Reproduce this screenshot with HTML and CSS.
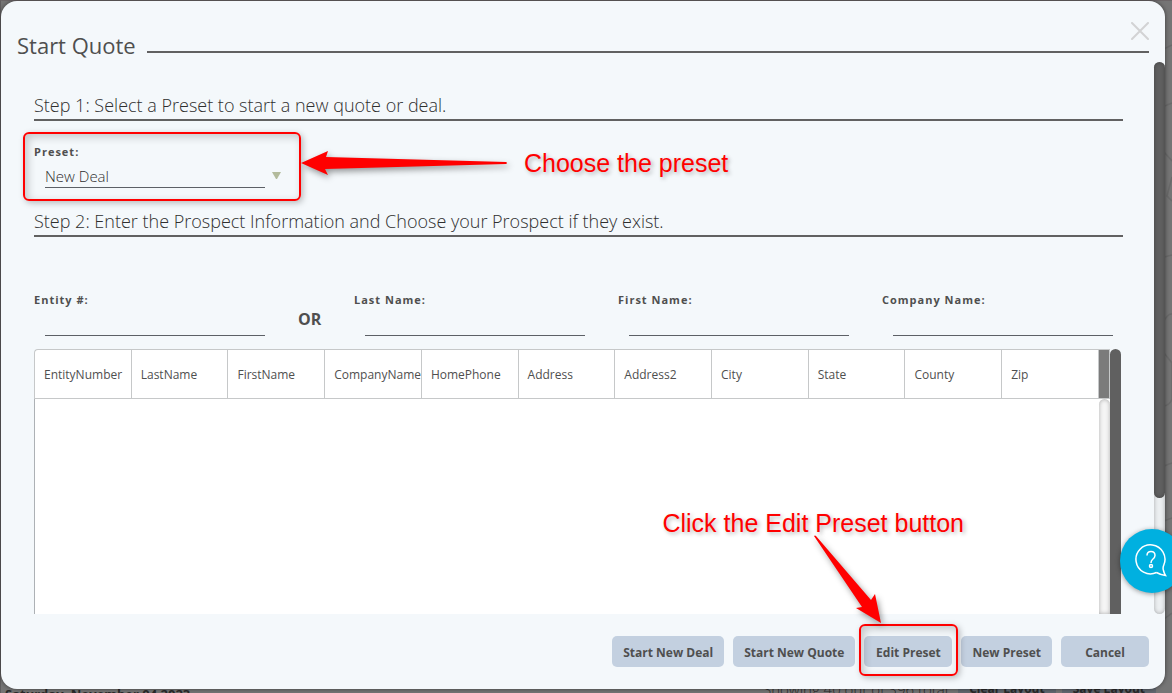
FILE: index.html
```html
<!DOCTYPE html>
<html lang="en">
<head>
    <meta charset="UTF-8">
    <meta name="viewport" content="width=device-width, initial-scale=1.0">
    <title>Start Quote</title>
    <link rel="stylesheet" href="styles.css">
</head>
<body>
    <!-- Dimmed page under the dialog -->
    <div class="page" aria-hidden="true">
        <svg class="page-pattern" viewBox="0 0 52 693" width="52" height="693">
            <path d="M40 50 L52 44 M40 107 L52 102 M44 151 L52 160 M52 176 L47 195 L52 200 M44 256 L52 254 M44 320 Q48 312 52 313 M44 352 L52 362 V398 Q50 404 44 405 M44 465 L52 462 M44 520 L52 517 M44 618 L52 612"/>
        </svg>
        <div class="page-footer">
            <span class="page-date">Saturday, November 04 2023</span>
            <span class="page-count">Showing 40 out of 396 total</span>
            <span class="page-btn">Clear Layout</span>
            <span class="page-btn">Save Layout</span>
        </div>
    </div>

    <div class="dialog" role="dialog" aria-labelledby="dialog-title">
        <button class="close" aria-label="Close">
            <svg viewBox="0 0 18 18" width="18" height="18"><path d="M1 1 L17 17 M17 1 L1 17"/></svg>
        </button>
        <div class="dialog-header">
            <h1 id="dialog-title">Start Quote</h1>
            <div class="header-line"></div>
        </div>

        <div class="dialog-body">
            <div class="content">
                <h2>Step 1: Select a Preset to start a new quote or deal.</h2>
                <div class="field preset">
                    <label for="preset">Preset:</label>
                    <div class="select-row">
                        <select id="preset">
                            <option>New Deal</option>
                        </select>
                        <svg class="caret" viewBox="0 0 9 7" width="9" height="7"><path d="M0 0 H9 L5 7 H4 Z"/></svg>
                    </div>
                </div>

                <h2 class="step-two">Step 2: Enter the Prospect Information and Choose your Prospect if they exist.</h2>
                <div class="prospect">
                    <div class="field">
                        <label for="entity">Entity #:</label>
                        <input type="text" id="entity">
                    </div>
                    <div class="or">OR</div>
                    <div class="field">
                        <label for="last-name">Last Name:</label>
                        <input type="text" id="last-name">
                    </div>
                    <div class="field">
                        <label for="first-name">First Name:</label>
                        <input type="text" id="first-name">
                    </div>
                    <div class="field">
                        <label for="company-name">Company Name:</label>
                        <input type="text" id="company-name">
                    </div>
                </div>

                <div class="grid">
                    <div class="grid-main">
                        <div class="grid-head">
                            <table>
                                <thead>
                                    <tr>
                                        <th>EntityNumber</th>
                                        <th>LastName</th>
                                        <th>FirstName</th>
                                        <th>CompanyName</th>
                                        <th>HomePhone</th>
                                        <th>Address</th>
                                        <th>Address2</th>
                                        <th>City</th>
                                        <th>State</th>
                                        <th>County</th>
                                        <th>Zip</th>
                                    </tr>
                                </thead>
                            </table>
                            <div class="grid-corner"></div>
                        </div>
                        <div class="grid-rows">
                            <div class="track"></div>
                        </div>
                    </div>
                    <div class="grid-scroll"></div>
                </div>
            </div>
            <div class="track dialog-scroll"><div class="thumb"></div></div>
        </div>

        <div class="dialog-footer">
            <button class="btn">Start New Deal</button>
            <button class="btn">Start New Quote</button>
            <button class="btn">Edit Preset</button>
            <button class="btn">New Preset</button>
            <button class="btn">Cancel</button>
        </div>
    </div>

    <button class="help" aria-label="Help">
        <svg viewBox="0 0 32 34" width="32" height="34">
            <path d="M21.500 29.500 A14.500 14.500 0 1 1 28.800 22 Q27.500 25 28.500 27.500 Q29 30 30.500 32.500 Q26 32 21.500 29.500"/>
            <path d="M12 12.500 Q12 8.500 16 8.500 Q20 8.500 20 12.500 Q20 14.500 17.500 16.500 Q16 17.800 16 20"/>
            <circle cx="16" cy="23" r="1.500"/>
        </svg>
    </button>

    <!-- Callouts -->
    <div class="callout-box box-preset"></div>
    <div class="callout-box box-edit"></div>
    <p class="callout text-preset">Choose the preset</p>
    <p class="callout text-edit">Click the Edit Preset button</p>
    <svg class="arrow arrow-preset" viewBox="0 0 207 26" width="207" height="26">
        <path d="M0 13 L27 1 L25 7 L205 12 Q207 13 205 14 L24 19 L27 25 Z"/>
    </svg>
    <svg class="arrow arrow-edit" viewBox="0 0 70 90" width="70" height="90">
        <path d="M0 1 Q1 0 2 1 L57 65 L61 59 L67 88 L42 73 L48 72 Z"/>
    </svg>
</body>
</html>
```

FILE: styles.css
```css
* {
    box-sizing: border-box;
}

body {
    margin: 0;
    height: 100vh;
    display: flex;
    padding: 1px 7px 4px 1px;
    position: relative;
    overflow: hidden;
    background: #757575;
    color: #4f4f4f;
    font-family: "Open Sans", "Noto Sans", sans-serif;
}

h1, h2, p {
    margin: 0;
    font-weight: 400;
}

button, input, select {
    font-family: inherit;
    color: inherit;
}

/* Page underneath */
.page {
    position: absolute;
    inset: 0;
    overflow: hidden;
    border-top: 1px solid #6b6567;
    border-left: 1px solid #5f5d5e;
}

.page-pattern {
    position: absolute;
    top: 0;
    right: 0;
    fill: none;
    stroke: #6a6a6a;
    stroke-width: 1.5;
}

.page-footer {
    position: absolute;
    left: 4px;
    right: 16px;
    bottom: -8px;
    display: flex;
    align-items: center;
    gap: 6px;
    height: 24px;
    font-size: 13px;
    color: #2a2a2a;
    white-space: nowrap;
}

.page-date {
    margin-right: auto;
    padding-top: 10px;
    font-weight: 700;
}

.page-count {
    margin-right: 4px;
    font-size: 15px;
    font-weight: 300;
}

.page-btn {
    height: 24px;
    padding: 0 11px;
    line-height: 24px;
    border-radius: 5px;
    background: #61676f;
    font-size: 12px;
    font-weight: 700;
}

/* Dialog */
.dialog {
    flex: 1;
    min-width: 0;
    display: flex;
    flex-direction: column;
    position: relative;
    border-radius: 16px;
    background: #f4f8fb;
    box-shadow: 0 0 4px rgba(0, 0, 0, 0.5);
    overflow: hidden;
}

.dialog-header {
    display: flex;
    align-items: flex-end;
    gap: 11px;
    height: 61px;
    padding: 0 16px 0 16px;
}

h1 {
    font-size: 22px;
    line-height: 34px;
}

.header-line {
    flex: 1;
    height: 2px;
    margin-bottom: 9px;
    background: #616161;
}

.close {
    position: absolute;
    top: 21px;
    right: 16px;
    width: 18px;
    height: 18px;
    padding: 0;
    border: 0;
    background: none;
}

.close svg {
    display: block;
    stroke: #d2d3d4;
    stroke-width: 2;
    stroke-linecap: round;
}

.dialog-body {
    flex: 1;
    min-height: 0;
    display: flex;
}

.content {
    flex: 1;
    min-width: 0;
    display: flex;
    flex-direction: column;
    padding: 31px 31px 0 33px;
}

h2 {
    padding-bottom: 2px;
    border-bottom: 2px solid #616161;
    color: #2f2f2f;
    font-size: 18px;
    line-height: 24px;
    font-weight: 300;
}

.step-two {
    margin-top: 21px;
}

.field label {
    display: block;
    font-size: 11px;
    line-height: 16px;
    font-weight: 700;
    letter-spacing: 1px;
}

.field input,
.field select {
    display: block;
    width: calc(100% - 11px);
    height: 28px;
    margin-left: 11px;
    padding: 5px 0 0;
    border: 0;
    border-bottom: 1px solid #5c6066;
    border-radius: 0;
    background: transparent;
    appearance: none;
    outline: none;
    color: #2f2f2f;
    font-size: 15px;
    font-weight: 300;
}

.preset {
    margin-top: 23px;
}

.select-row {
    display: flex;
    align-items: center;
    gap: 7px;
}

.select-row select {
    width: 220px;
}

.caret {
    margin-top: 2px;
    fill: #b3bb9c;
}

.prospect {
    display: grid;
    grid-template-columns: 1fr 23px 1fr 1fr 1fr;
    gap: 33px;
    margin: 55px 10px 0 0;
}

.or {
    padding-top: 16px;
    font-size: 16px;
    line-height: 22px;
    font-weight: 700;
}

/* Results grid */
.grid {
    flex: 1;
    display: flex;
    margin: 13px 2px 0 0;
}

.grid-main {
    flex: 1;
    min-width: 0;
    display: flex;
    flex-direction: column;
}

.grid-head {
    display: flex;
    height: 50px;
    border: 1px solid #c6c8c9;
    border-right: 0;
    border-radius: 4px 0 0 0;
    background: #fff;
}

table {
    flex: 1;
    width: 100%;
    table-layout: fixed;
    border-collapse: separate;
    border-spacing: 0;
}

th {
    height: 48px;
    padding: 0 0 0 9px;
    border-right: 1px solid #c6c8c9;
    overflow: hidden;
    text-align: left;
    font-size: 12px;
    font-weight: 400;
}

.grid-corner {
    width: 11px;
    background: #7b7b7b;
    border-right: 1px solid #c6c8c9;
}

.grid-rows {
    flex: 1;
    display: flex;
    justify-content: flex-end;
    border-left: 1px solid #adb1b5;
    background: #fff;
}

.track {
    width: 11px;
    border-radius: 6px;
    background: #f5f5f5;
    box-shadow: inset 0 0 4px rgba(0, 0, 0, 0.3);
}

.grid-rows .track {
    border-radius: 6px 6px 0 0;
}

.grid-scroll {
    width: 11px;
    border-radius: 6px 6px 0 0;
    background: #606060;
}

.dialog-scroll {
    background: #eceff1;
}

.thumb {
    height: 79%;
    border-radius: 6px;
    background: #606060;
    box-shadow: inset 0 0 4px rgba(0, 0, 0, 0.3);
}

.dialog-footer {
    display: flex;
    justify-content: flex-end;
    gap: 9px;
    padding: 22px 16px;
}

.btn {
    min-width: 88px;
    height: 31px;
    padding: 2px 11px 0;
    border: 0;
    border-radius: 5px;
    background: #c3d0e0;
    font-size: 12px;
    font-weight: 700;
}

/* Help bubble */
.help {
    position: absolute;
    left: calc(100% - 52px);
    top: 529px;
    width: 64px;
    height: 64px;
    padding: 0 0 2px 15px;
    border: 0;
    border-radius: 50%;
    background: #00b0e0;
    box-shadow: 0 1px 5px rgba(0, 0, 0, 0.4);
}

.help svg {
    display: block;
    fill: none;
    stroke: #fff;
    stroke-width: 1.5;
}

/* Callouts */
.callout-box {
    position: absolute;
    border: 2px solid #f00;
    border-radius: 6px;
    box-shadow: 2px 2px 6px rgba(0, 0, 0, 0.25), inset 3px 3px 8px rgba(0, 0, 0, 0.2);
    pointer-events: none;
}

.box-preset {
    left: 23px;
    top: 132px;
    width: 278px;
    height: 69px;
}

.box-edit {
    right: 214px;
    bottom: 17px;
    width: 99px;
    height: 52px;
}

.callout {
    position: absolute;
    font-family: "Liberation Sans", Arial, sans-serif;
    font-size: 25px;
    line-height: 28px;
    color: #f00;
    text-shadow: 2px 2px 4px rgba(0, 0, 0, 0.3);
    white-space: nowrap;
}

.text-preset {
    left: 524px;
    top: 149px;
}

.text-edit {
    right: 208px;
    bottom: 156px;
}

.arrow {
    position: absolute;
    overflow: visible;
    fill: #f00;
    filter: drop-shadow(2px 3px 3px rgba(0, 0, 0, 0.4));
    pointer-events: none;
}

.arrow-preset {
    left: 301px;
    top: 150px;
}

.arrow-edit {
    right: 288px;
    bottom: 68px;
}
```
